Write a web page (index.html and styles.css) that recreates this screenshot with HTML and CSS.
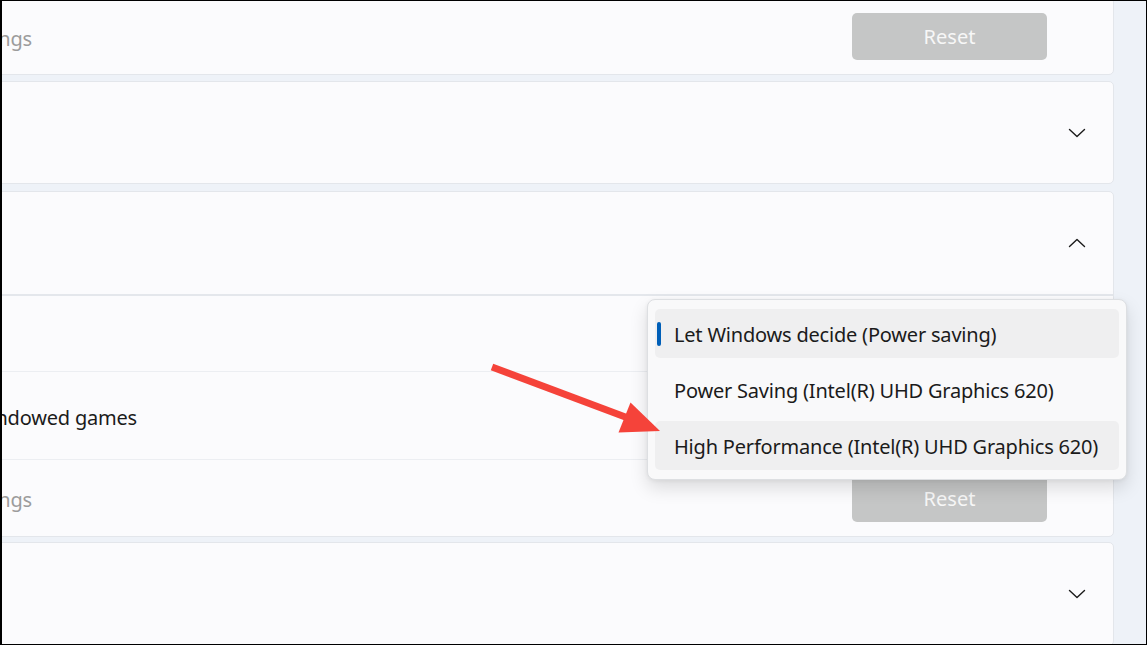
FILE: index.html
```html
<!DOCTYPE html>
<html lang="en">
<head>
<meta charset="utf-8">
<title>Graphics settings</title>
<link rel="stylesheet" href="styles.css">
</head>
<body>
<div class="frame">
  <div class="list">
    <section class="card">
      <div class="row row-reset">
        <div class="label label-muted label-end-a label-low"><span>Reset to default settings</span></div>
        <button class="btn-reset" type="button">Reset</button>
      </div>
    </section>

    <section class="card">
      <div class="row row-head row-head-short">
        <div class="label"></div>
        <svg class="chev" width="18" height="10" viewBox="0 0 18 10"><polyline points="1.5,1.5 9,8.5 16.5,1.5"/></svg>
      </div>
    </section>

    <section class="card card-open">
      <div class="row row-head">
        <div class="label"></div>
        <svg class="chev" width="18" height="10" viewBox="0 0 18 10"><polyline points="1.5,8.5 9,1.5 16.5,8.5"/></svg>
      </div>
      <div class="head-divider"></div>
      <div class="sub sub-gpu"></div>
      <div class="sub sub-games">
        <div class="label label-end-b"><span>Optimizations for windowed games</span></div>
      </div>
      <div class="sub sub-reset">
        <div class="label label-muted label-end-a label-low"><span>Reset to default settings</span></div>
        <button class="btn-reset" type="button">Reset</button>
      </div>
    </section>

    <section class="card card-last">
      <div class="row row-head">
        <div class="label"></div>
        <svg class="chev" width="18" height="10" viewBox="0 0 18 10"><polyline points="1.5,1.5 9,8.5 16.5,1.5"/></svg>
      </div>
    </section>
  </div>

  <div class="flyout">
    <div class="option option-selected"><span class="indicator"></span>Let Windows decide (Power saving)</div>
    <div class="option">Power Saving (Intel(R) UHD Graphics 620)</div>
    <div class="option option-hover">High Performance (Intel(R) UHD Graphics 620)</div>
  </div>

  <svg class="arrow" width="1147" height="645" viewBox="0 0 1147 645">
    <line x1="492" y1="367" x2="628" y2="418" />
    <polygon points="660,431 618.5,432.5 630.5,402.5" />
  </svg>
</div>
</body>
</html>
```

FILE: styles.css
```css
* { box-sizing: border-box; }

html, body {
  margin: 0;
  padding: 0;
  background: #000;
}

body {
  font-family: "Noto Sans", "Open Sans", "Liberation Sans", sans-serif;
  color: #1b1b1b;
}

.frame {
  position: relative;
  width: 1147px;
  height: 645px;
  border-style: solid;
  border-color: #000;
  border-width: 1px 1px 1px 2px;
  background: #eef2f8;
  overflow: hidden;
}

.list {
  display: flex;
  flex-direction: column;
  gap: 6px;
  margin-top: -4px;
  margin-left: -22px;
  width: 1134px;
}

.card {
  background: #fbfbfd;
  border: 1px solid #e3e6eb;
  border-radius: 5px;
}

.card-open { margin-top: 1px; }
.card-last { margin-top: -1px; }

.row {
  display: flex;
  align-items: center;
  justify-content: space-between;
}

.row-reset { height: 76px; padding-right: 66px; }
.row-head { height: 102px; padding-right: 27px; }
.row-head-short { height: 101px; }

.label {
  display: flex;
  justify-content: flex-end;
  white-space: nowrap;
  font-size: 20px;
  letter-spacing: -0.2px;
  line-height: 28px;
}

.label-low { margin-top: 6px; }
.label-muted { color: #9c9c9c; }
.label-end-a { width: 51px; }
.label-end-b { width: 156px; }

.chev {
  display: block;
  fill: none;
  stroke: #1b1b1b;
  stroke-width: 1.4;
  stroke-linecap: round;
  stroke-linejoin: round;
}

.btn-reset {
  width: 195px;
  height: 47px;
  border: none;
  border-radius: 5px;
  background: #c5c6c6;
  color: #f7f7f7;
  font-family: inherit;
  font-size: 20px;
  padding: 0;
}

.head-divider {
  height: 2px;
  background: #e4e7ec;
}

.sub {
  display: flex;
  align-items: center;
  justify-content: space-between;
  border-bottom: 1px solid #eceef2;
}

.sub-gpu { height: 76px; }
.sub-games { height: 88px; padding-top: 5px; }
.sub-reset { height: 76px; border-bottom: none; padding-right: 66px; padding-top: 0; }
.sub-reset .label-low { margin-top: 3px; }

.flyout {
  position: absolute;
  left: 645px;
  top: 298px;
  width: 480px;
  height: 181px;
  padding: 9px 7px;
  display: flex;
  flex-direction: column;
  gap: 7px;
  background: #f9f9fa;
  border: 1px solid #dddfe2;
  border-radius: 8px;
  box-shadow: 0 8px 18px rgba(0, 0, 0, 0.13), 0 1px 4px rgba(0, 0, 0, 0.06);
}

.option {
  position: relative;
  height: 49px;
  display: flex;
  align-items: center;
  padding-left: 19px;
  padding-top: 1px;
  font-size: 20px;
  letter-spacing: -0.2px;
  color: #1b1b1b;
  border-radius: 5px;
  white-space: nowrap;
}

.option-selected, .option-hover { background: #efeff0; }

.indicator {
  position: absolute;
  left: 2px;
  top: 13px;
  width: 4px;
  height: 24px;
  border-radius: 2px;
  background: #005fb8;
}

.arrow {
  position: absolute;
  left: -2px;
  top: -1px;
  pointer-events: none;
}

.arrow line {
  stroke: #f5433a;
  stroke-width: 7;
}

.arrow polygon { fill: #f5433a; }
```
